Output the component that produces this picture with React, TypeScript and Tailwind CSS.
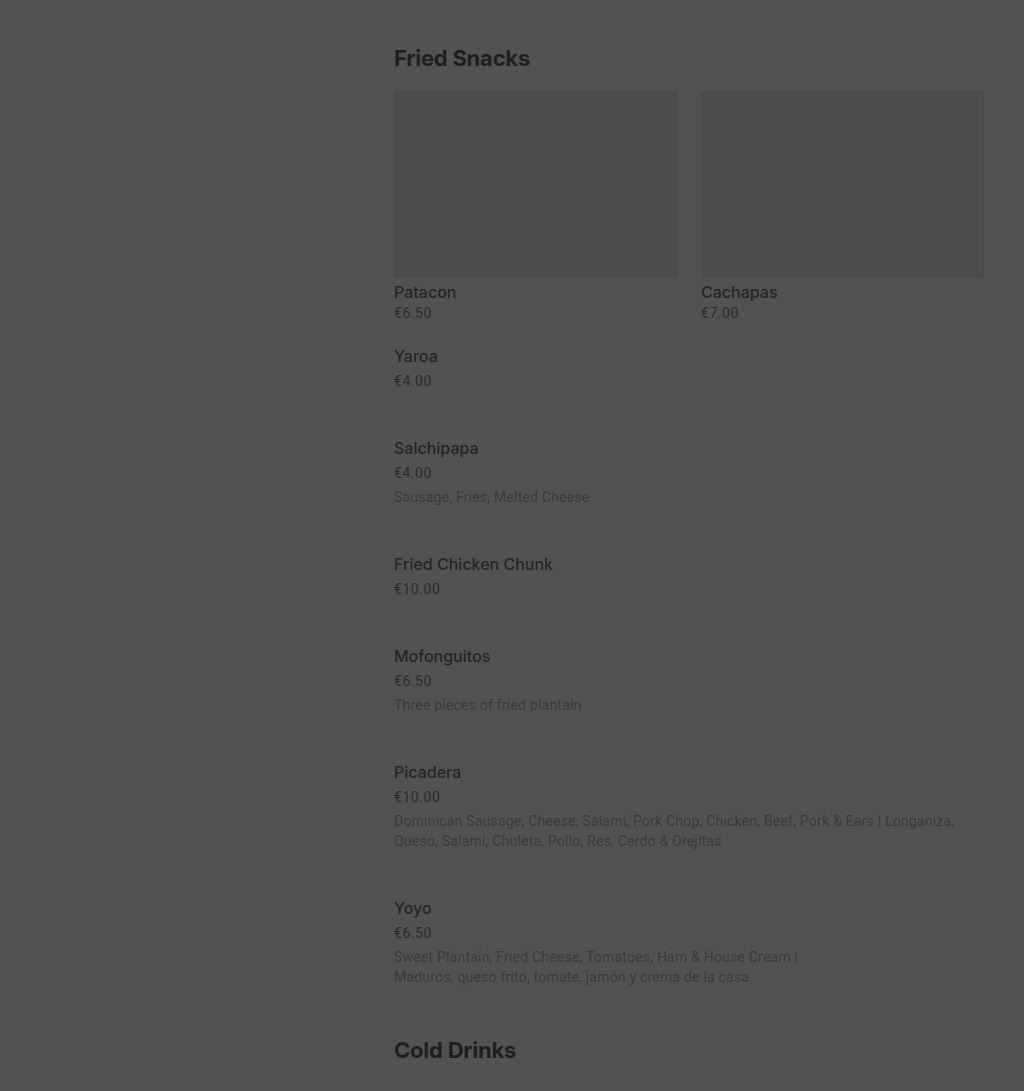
const CARDS = [
  { name: 'Patacon', price: '€6.50' },
  { name: 'Cachapas', price: '€7.00' },
]

const ITEMS: { name: string; price: string; desc?: string[] }[] = [
  { name: 'Yaroa', price: '€4.00' },
  { name: 'Salchipapa', price: '€4.00', desc: ['Sausage, Fries, Melted Cheese'] },
  { name: 'Fried Chicken Chunk', price: '€10.00' },
  { name: 'Mofonguitos', price: '€6.50', desc: ['Three pieces of fried plantain'] },
  {
    name: 'Picadera',
    price: '€10.00',
    desc: [
      'Dominican Sausage, Cheese, Salami, Pork Chop, Chicken, Beef, Pork & Ears | Longaniza,',
      'Queso, Salami, Chuleta, Pollo, Res, Cerdo & Orejitas',
    ],
  },
  {
    name: 'Yoyo',
    price: '€6.50',
    desc: [
      'Sweet Plantain, Fried Cheese, Tomatoes, Ham & House Cream |',
      'Maduros, queso frito, tomate, jamón y crema de la casa',
    ],
  },
]

export default function App() {
  return (
    <div className="min-h-screen bg-[#525252] font-['Inter',sans-serif] overflow-hidden h-[1091px]">
      <div className="grid grid-cols-[330px_1fr] gap-6 px-10">
        {/* sidebar (empty under overlay) */}
        <aside />

        <main className="pt-[42px]">
          <h2 className="text-[22px] leading-8 font-bold tracking-[-0.01em] text-[#1f1f1f]">Fried Snacks</h2>

          {/* featured cards */}
          <div className="grid grid-cols-2 gap-6 mt-[17px]">
            {CARDS.map((c) => (
              <div key={c.name}>
                <div className="h-[187px] bg-[#4c4c4c] border border-[#4a4a4a]" />
                <p className="mt-1 text-base leading-5 font-medium text-[#252525]">{c.name}</p>
                <p className="mt-px text-sm leading-5 tracking-[0.04em] font-['Roboto',sans-serif] text-[#2b2b2b]">{c.price}</p>
              </div>
            ))}
          </div>

          {/* list */}
          <div className="mt-[23px] flex flex-col gap-[47px]">
            {ITEMS.map((item) => (
              <div key={item.name}>
                <p className="text-base leading-5 font-medium text-[#252525]">{item.name}</p>
                <p className="mt-[5px] text-sm leading-5 tracking-[0.04em] font-['Roboto',sans-serif] text-[#2b2b2b]">{item.price}</p>
                {item.desc && (
                  <p className="mt-1 text-sm leading-5 tracking-[0.015em] font-['Roboto',sans-serif] text-[#3a3a3a]">
                    {item.desc.map((line, i) => (
                      <span key={i} className="block whitespace-nowrap">
                        {line}
                      </span>
                    ))}
                  </p>
                )}
              </div>
            ))}
            <h2 className="text-[22px] leading-8 font-bold tracking-[-0.01em] text-[#1f1f1f]">Cold Drinks</h2>
          </div>
        </main>
      </div>
    </div>
  )
}
